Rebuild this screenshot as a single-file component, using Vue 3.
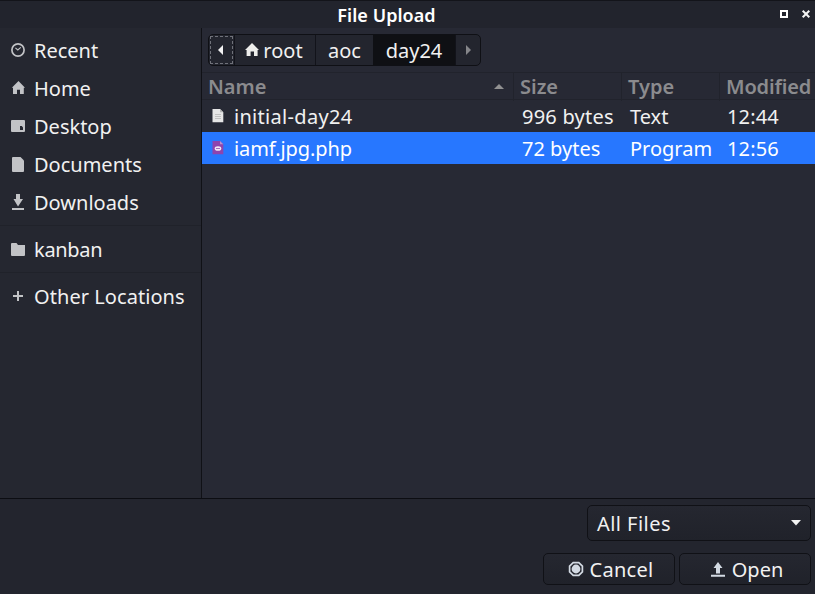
<script setup>
const places = [
  { name: 'Recent', icon: 'recent' },
  { name: 'Home', icon: 'home' },
  { name: 'Desktop', icon: 'desktop' },
  { name: 'Documents', icon: 'document' },
  { name: 'Downloads', icon: 'download' },
]
const files = [
  { name: 'initial-day24', size: '996 bytes', type: 'Text', modified: '12:44', selected: false },
  { name: 'iamf.jpg.php', size: '72 bytes', type: 'Program', modified: '12:56', selected: true },
]
</script>

<template>
  <div class="dialog">
    <header class="titlebar">
      <span class="title">File Upload</span>
      <div class="controls">
        <svg width="8" height="8" viewBox="0 0 8 8" shape-rendering="crispEdges"><path d="M1 1H7V7H1Z" fill="none" stroke="#fff" stroke-width="2" /></svg>
        <svg width="8" height="8" viewBox="0 0 8 8"><path d="M.7 .7L7.3 7.3M7.3 .7L.7 7.3" stroke="#f4f4f4" stroke-width="2" /></svg>
      </div>
    </header>

    <div class="body">
      <nav class="sidebar">
        <div v-for="p in places" :key="p.name" class="place">
          <svg width="16" height="16" viewBox="0 0 16 16" fill="#c2c3c6">
            <g v-if="p.icon === 'recent'" fill="none" stroke="#c2c3c6"><circle cx="8" cy="7" r="6.1" stroke-width="1.7" /><path d="M5.4 4.8L7.8 6.9L10.8 4.3" stroke-width="1.1" /></g>
            <path v-else-if="p.icon === 'home'" d="M8.5 0L15 6.7H13.8V13H10V8.7H7V13H3V6.7H1.8Z" />
            <path v-else-if="p.icon === 'desktop'" fill-rule="evenodd" d="M2 1H14Q15 1 15 2V12Q15 13 14 13H2Q1 13 1 12V2Q1 1 2 1ZM10 7V11H13V8.5L11.8 7Z" />
            <path v-else-if="p.icon === 'document'" d="M3 0H10.5L14 3.5V14Q14 15 13 15H3Q2 15 2 14V1Q2 0 3 0Z" />
            <path v-else d="M6 -1H10V4H13L8 11.6L3.5 4H6ZM2 13H14V15H2Z" />
          </svg>
          <span>{{ p.name }}</span>
        </div>
        <div class="place group">
          <svg width="16" height="16" viewBox="0 0 16 16" fill="#c2c3c6"><path d="M2 1H6.5L8 3H15V13Q15 14 14 14H2Q1 14 1 13V2Q1 1 2 1Z" /></svg>
          <span class="kanban">kanban</span>
        </div>
        <div class="place group">
          <svg width="16" height="16" viewBox="0 0 16 16" fill="#c2c3c6"><path d="M7 2H9V6H13V8H9V12H7V8H3V6H7Z" /></svg>
          <span class="other">Other Locations</span>
        </div>
      </nav>

      <main class="content">
        <div class="pathbar">
          <button class="crumb back"><svg width="6" height="10" viewBox="0 0 6 10"><path d="M5 0V10L0 5Z" fill="#f2f2f2" /></svg></button>
          <button class="crumb root">
            <svg width="14" height="14" viewBox="0 0 14 14"><path d="M7 0L14 7H12.6V13H9V8.6H5.6V13H1.6V7H0Z" fill="#eeeeec" /></svg>
            <span>root</span>
          </button>
          <button class="crumb aoc"><span>aoc</span></button>
          <button class="crumb current"><span>day24</span></button>
          <button class="crumb next"><svg width="6" height="10" viewBox="0 0 6 10"><path d="M1 0V10L6 5Z" fill="#85868a" /></svg></button>
        </div>

        <div class="row head">
          <div class="cell name">Name<svg class="sort" width="10" height="5" viewBox="0 0 10 5"><path d="M0 5L5 0L10 5Z" fill="#919191" /></svg></div>
          <div class="cell size">Size</div>
          <div class="cell type">Type</div>
          <div class="cell modified">Modified</div>
        </div>
        <div v-for="f in files" :key="f.name" class="row file" :class="{ selected: f.selected }">
          <div class="cell name">
            <svg v-if="!f.selected" width="12" height="14" viewBox="0 0 12 14"><path d="M1 0H8L11.3 3.3V13.3H.5V.5Z" fill="#e6e6e6" /><path d="M8 0V3.3H11.3Z" fill="#b5b5b5" /><path d="M3 5.5H9M3 7.5H9M3 9.5H9" stroke="#c0c0c0" /></svg>
            <svg v-else width="12" height="14" viewBox="0 0 12 14"><path d="M1 0H8L11.3 3.3V13.3H.5V.5Z" fill="#8e44ad" /><path d="M8 0V3.3H11.3Z" fill="#bd8fd0" /><ellipse cx="6" cy="7.5" rx="3.3" ry="2.3" fill="#f0e6f4" /><path d="M4 7.5H8" stroke="#a76bc0" /></svg>
            <span class="label">{{ f.name }}</span>
          </div>
          <div class="cell size"><span class="label">{{ f.size }}</span></div>
          <div class="cell type"><span class="label">{{ f.type }}</span></div>
          <div class="cell modified"><span class="label">{{ f.modified }}</span></div>
        </div>
      </main>
    </div>

    <footer class="footer">
      <button class="filter"><span>All Files</span><svg width="10" height="6" viewBox="0 0 10 6"><path d="M0 0H10L5 5.4Z" fill="#f2f2f2" /></svg></button>
      <div class="actions">
        <button class="action cancel">
          <svg width="16" height="16" viewBox="0 0 16 16"><path d="M5.2 1.6H10.8L14.4 5.2V10.8L10.8 14.4H5.2L1.6 10.8V5.2Z" fill="none" stroke="#d3dae3" stroke-width="1.7" /><circle cx="8" cy="8" r="4.4" fill="#d3dae3" /></svg>
          <span>Cancel</span>
        </button>
        <button class="action open">
          <svg width="16" height="16" viewBox="0 0 16 16"><path d="M8 1L12.5 7H10V12.5H6V7H3.5ZM1 13.8H15V15.8H1Z" fill="#d3dae3" /></svg>
          <span>Open</span>
        </button>
      </div>
    </footer>
  </div>
</template>

<style>
body { margin: 0; background: #23252e; overflow: hidden; }
</style>

<style scoped>
.dialog { box-sizing: border-box; width: 815px; height: 594px; display: flex; flex-direction: column; background: #23252e; color: #f1f1f1; font: 20px/28px "Noto Sans", sans-serif; overflow: hidden; }
.dialog * { box-sizing: border-box; }
svg { display: block; flex: none; overflow: visible; }
button { margin: 0; padding: 0; border: 0; background: none; color: inherit; font: inherit; display: flex; align-items: center; }
.titlebar { position: relative; height: 28px; flex: none; display: flex; justify-content: center; align-items: center; border-top: 1px solid #13141a; background: #22242d; padding-right: 42px; }
.title { font-size: 18px; font-weight: 600; color: #fff; line-height: 26px; letter-spacing: .05px; }
.controls { position: absolute; right: 5px; top: 9px; display: flex; gap: 14px; }
.body { display: flex; height: 470px; flex: none; }
.sidebar { width: 202px; flex: none; border-right: 1px solid #101116; background: #252730; padding-top: 4px; }
.place { height: 38px; display: flex; align-items: center; padding-left: 10px; gap: 8px; white-space: nowrap; }
.place.group { height: 47px; padding-top: 2px; border-top: 1px solid #20222a; }
.place.group:nth-last-child(2) { margin-top: 3px; }
.kanban { letter-spacing: -.3px; }
.other { letter-spacing: .06px; }
.content { flex: 1; min-width: 0; background: #272934; padding-top: 6px; }
.pathbar { display: flex; width: 273px; height: 32px; margin-left: 6px; margin-bottom: 6px; border: 1px solid #0f1015; border-radius: 5px; background: #23252e; overflow: hidden; }
.crumb { height: 30px; justify-content: center; border-left: 1px solid #12131a; }
.crumb span { padding-top: 2px; }
.crumb.back { width: 25px; border-left: 0; padding-right: 1px; outline: 1px dashed #70727a; outline-offset: -2px; }
.crumb.root { width: 81px; gap: 4px; padding-right: 2px; }
.crumb.aoc { width: 58px; }
.crumb.current { width: 82px; background: #0f1014; border-left: 0; }
.crumb.next { flex: 1; }
.row { display: grid; grid-template-columns: 312px 108px 98px 95px; height: 32px; white-space: nowrap; }
.cell { display: flex; align-items: center; padding-left: 8px; }
.head { height: 28px; border-top: 1px solid #21232c; border-bottom: 1px solid #21232c; color: #8b8b8e; font-weight: 600; }
.head .cell { border-right: 1px solid #21232c; }
.head .name { padding-left: 6px; justify-content: space-between; padding-right: 9px; }
.head .size, .head .type { padding-left: 6px; }
.head .modified { padding-left: 6px; border-right: 0; letter-spacing: -.15px; }
.sort { margin-top: -2px; }
.file .label { padding-top: 2px; }
.file .name { padding-left: 10px; gap: 10px; }
.file .modified { padding-left: 7px; letter-spacing: .15px; }
.file:not(.selected) .name { letter-spacing: .3px; }
.file:not(.selected) .size { letter-spacing: .22px; }
.file.selected { background: #2777ff; color: #fff; }
.file.selected .name { letter-spacing: -.08px; }
.footer { flex: 1; border-top: 1px solid #0c0d12; padding: 6px 4px 0 0; display: flex; flex-direction: column; align-items: flex-end; gap: 12px; }
.footer span { padding-top: 2px; }
.filter { width: 224px; height: 36px; border: 1px solid #101116; border-radius: 5px; padding: 0 9px; justify-content: space-between; background: linear-gradient(#252730, #20222a); letter-spacing: .45px; }
.actions { display: flex; gap: 4px; }
.action { width: 132px; height: 32px; border: 1px solid #101116; border-radius: 5px; justify-content: center; gap: 6px; padding-left: 3px; background: linear-gradient(#252730, #20222a); }
.cancel { letter-spacing: .25px; }
</style>
